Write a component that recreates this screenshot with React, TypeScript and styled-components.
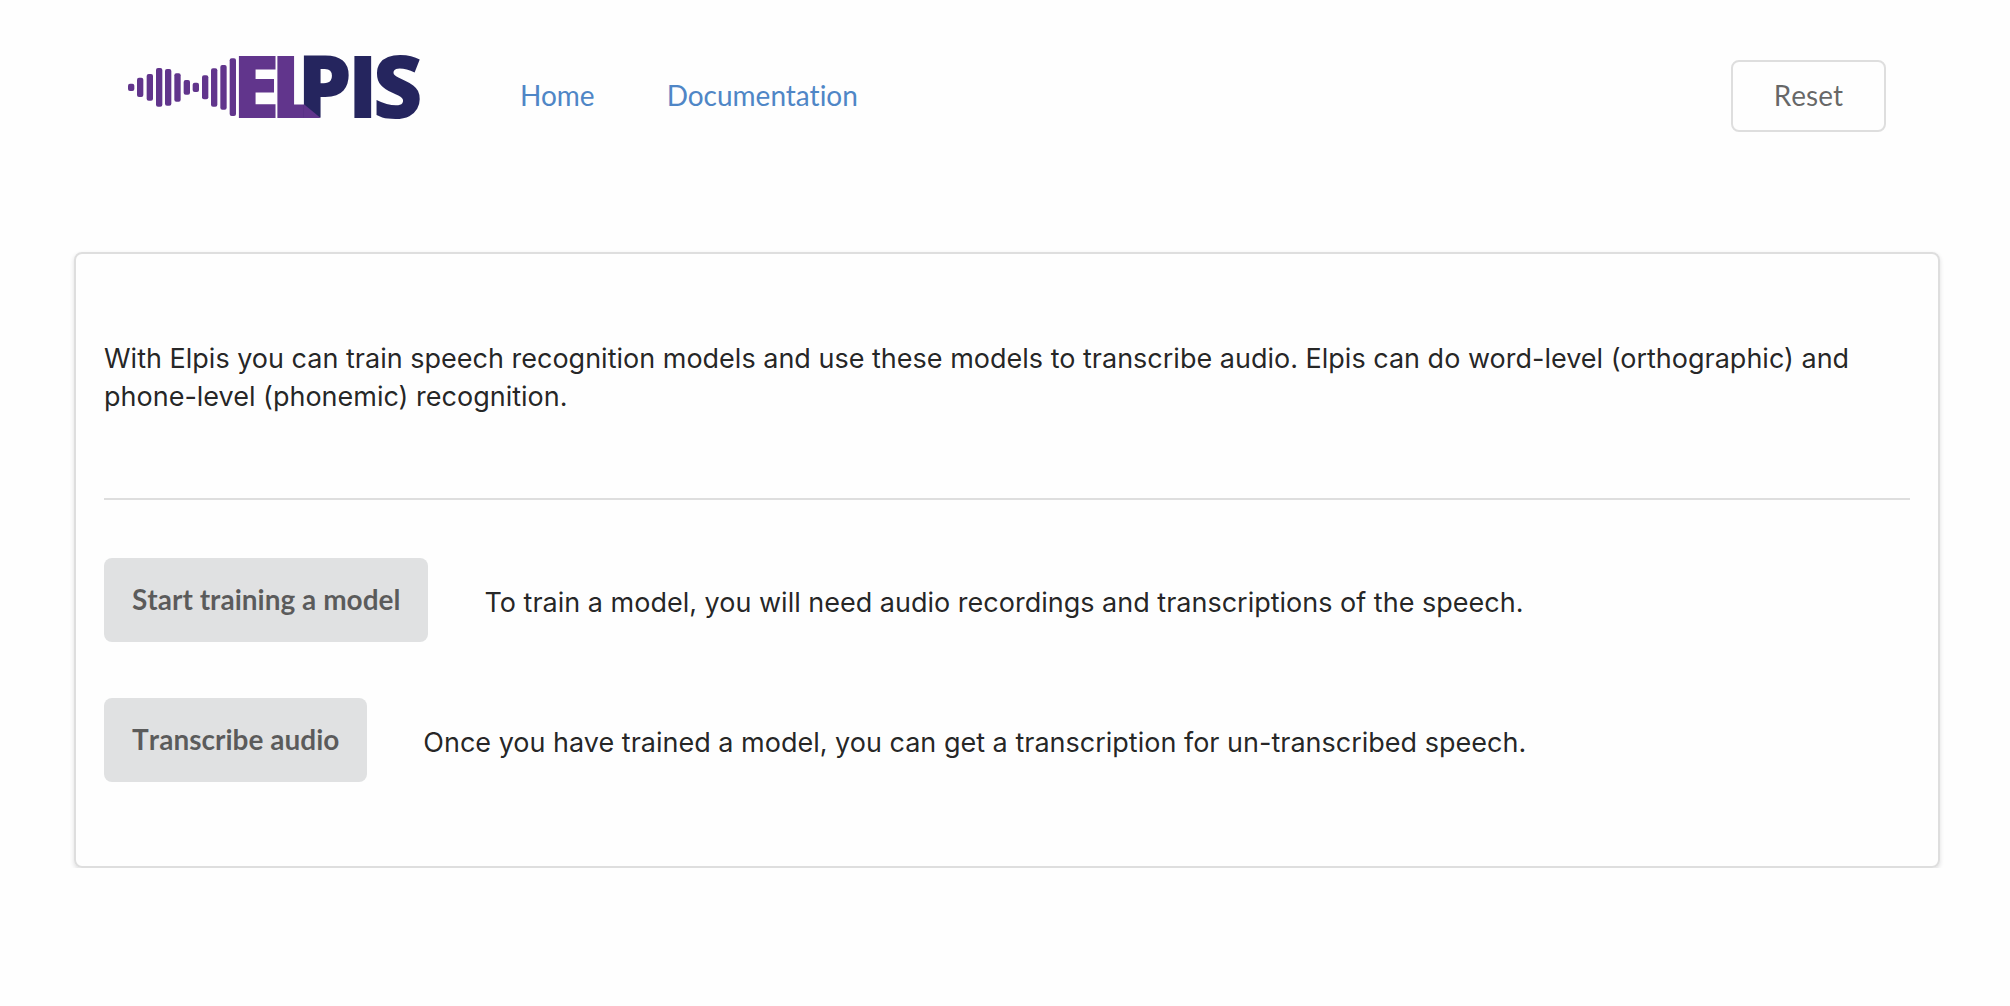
import React from "react";
import styled, { createGlobalStyle } from "styled-components";

const GlobalStyle = createGlobalStyle`
  *, *::before, *::after { box-sizing: border-box; }
  body {
    margin: 0;
    background: #fefefe;
    color: rgba(0, 0, 0, 0.87);
    font: 27px/38px Inter, "Liberation Sans", sans-serif;
  }
`;

const Page = styled.div`
  padding: 53px 70px 0 74px;
`;

const Header = styled.header`
  display: flex;
  align-items: center;
  padding: 0 54px;
`;

const LogoLink = styled.a`
  display: block;
  height: 86px;
  margin-right: 98px;
`;

const LogoImage = styled.svg`
  display: block;
  overflow: visible;
`;

const Nav = styled.nav`
  display: flex;
  gap: 72px;
  flex: 1;
  padding-bottom: 2px;
`;

const NavLink = styled.a`
  font-family: Lato, sans-serif;
  font-size: 28px;
  font-variant-ligatures: none;
  color: #4f86c6;
  text-decoration: none;
`;

const BaseButton = styled.button`
  border: 0;
  border-radius: 8px;
  font: 28px/28px Lato, sans-serif;
  font-kerning: none;
  color: rgba(0, 0, 0, 0.6);
  cursor: pointer;
`;

const ResetButton = styled(BaseButton)`
  padding: 19px 41px 21px;
  border: 2px solid #dedede;
  background: #fefefe;
`;

const ActionButton = styled(BaseButton)`
  flex: none;
  padding: 27px 28px 29px;
  background: #e0e1e2;
  font-weight: 700;
`;

const Card = styled.main`
  margin-top: 113px;
  padding: 86px 28px 84px;
  border: 2px solid #dedede;
  border-radius: 8px;
  box-shadow: 0 2px 4px rgba(34, 36, 38, 0.15);
`;

const Intro = styled.p`
  margin: 0;
`;

const Divider = styled.hr`
  margin: 82px 0 58px;
  border: 0;
  border-top: 2px solid #dedede;
`;

const Actions = styled.div`
  display: flex;
  flex-direction: column;
  gap: 56px;
`;

const ActionRow = styled.div`
  display: flex;
  align-items: center;
  gap: 56px;
`;

const ActionText = styled.p`
  margin: 0;
  padding-top: 6px;
`;

const Wordmark = styled.text`
  font-family: "Open Sans", sans-serif;
  font-weight: 800;
  font-size: 259px;
`;

// Each sound bar as [left, top, bottom].
const bars = [
  [54, 131, 153],
  [81, 113, 171],
  [110, 102, 182],
  [138, 84, 200],
  [165, 87, 197],
  [193, 100, 185],
  [221, 120, 164],
  [248, 128, 156],
  [276, 106, 178],
  [303, 85, 200],
  [331, 75, 209],
  [359, 55, 228],
];

function Logo() {
  return (
    <LogoImage width="294" height="86" viewBox="54 39 882 258" role="img" aria-label="Elpis">
      {bars.map(([x, top, bottom]) => (
        <rect key={x} x={x} y={top} width="19" height={bottom - top} rx="6" fill="#61358c" />
      ))}
      <Wordmark y="234" fill="#61358c">
        <tspan x="367">E</tspan>
        <tspan x="482">L</tspan>
      </Wordmark>
      <Wordmark y="234" fill="#25255e">
        <tspan x="562">P</tspan>
        <tspan x="713">I</tspan>
        <tspan x="788">S</tspan>
      </Wordmark>
      <path d="M582 193 L632 234 H582 Z" fill="#61358c" />
    </LogoImage>
  );
}

const actions = [
  {
    label: "Start training a model",
    text: "To train a model, you will need audio recordings and transcriptions of the speech.",
  },
  {
    label: "Transcribe audio",
    text: "Once you have trained a model, you can get a transcription for un-transcribed speech.",
  },
];

export default function App() {
  return (
    <>
      <GlobalStyle />
      <Page>
        <Header>
          <LogoLink href="#">
            <Logo />
          </LogoLink>
          <Nav>
            <NavLink href="#">Home</NavLink>
            <NavLink href="#docs">Documentation</NavLink>
          </Nav>
          <ResetButton type="button">Reset</ResetButton>
        </Header>
        <Card>
          <Intro>
            With Elpis you can train speech recognition models and use these models to transcribe
            audio. Elpis can do word-level (orthographic) and phone-level (phonemic) recognition.
          </Intro>
          <Divider />
          <Actions>
            {actions.map(({ label, text }) => (
              <ActionRow key={label}>
                <ActionButton type="button">{label}</ActionButton>
                <ActionText>{text}</ActionText>
              </ActionRow>
            ))}
          </Actions>
        </Card>
      </Page>
    </>
  );
}
